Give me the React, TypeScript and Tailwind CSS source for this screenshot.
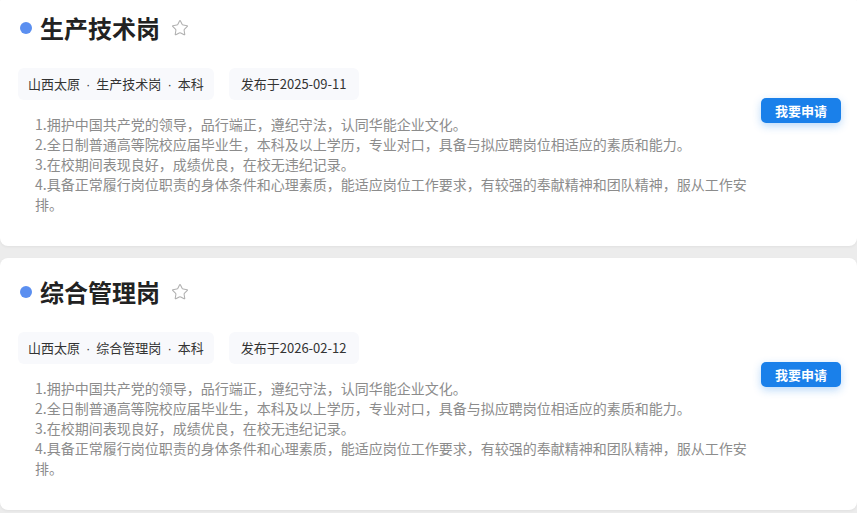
import React from 'react';
import { Star } from 'lucide-react';

const REQUIREMENTS = [
  '1.拥护中国共产党的领导，品行端正，遵纪守法，认同华能企业文化。',
  '2.全日制普通高等院校应届毕业生，本科及以上学历，专业对口，具备与拟应聘岗位相适应的素质和能力。',
  '3.在校期间表现良好，成绩优良，在校无违纪记录。',
  '4.具备正常履行岗位职责的身体条件和心理素质，能适应岗位工作要求，有较强的奉献精神和团队精神，服从工作安排。',
];

const JOBS = [
  { title: '生产技术岗', date: '2025-09-11' },
  { title: '综合管理岗', date: '2026-02-12' },
];

const Dot = () => <span className="font-['Liberation_Sans',sans-serif] mx-[6px]">·</span>;

const JobCard = ({ title, date }: { title: string; date: string }) => (
  <div className="bg-white rounded-lg h-[252px] pt-[16px] pl-[18px] pr-[16px] shadow-[0_1px_3px_rgba(0,0,0,0.05)]">
    {/* Title */}
    <div className="flex items-center h-[36px]">
      <span className="ml-[2px] w-[12px] h-[12px] rounded-full bg-[#5b8ff0]" />
      <h2 className="ml-[8px] text-[24px] font-bold text-[#222] leading-[36px]">{title}</h2>
      <Star size={18} strokeWidth={1.4} className="ml-[11px] text-[#b0b0b0]" />
    </div>

    <div className="flex items-start mt-[22px]">
      <div className="flex-1">
        {/* Tags */}
        <div className="flex gap-[15px]">
          <span className="h-[32px] leading-[32px] px-[10px] rounded-md bg-[#f8f9fc] text-[13px] text-[#333]">
            山西太原<Dot />{title}<Dot />本科
          </span>
          <span className="h-[32px] leading-[32px] px-[12px] rounded-md bg-[#f8f9fc] text-[13px] text-[#333]">
            发布于{date}
          </span>
        </div>

        {/* Requirements */}
        <div className="mt-[14px] pl-[17px] w-[742px] text-[14px] leading-[20px] text-[#8c8c8c]">
          {REQUIREMENTS.map((r) => (
            <p key={r}>{r}</p>
          ))}
        </div>
      </div>

      <button className="mt-[30px] w-[80px] h-[25px] rounded-[5px] bg-[#1a80ea] text-white text-[13px] font-bold shadow-[0_3px_8px_rgba(26,128,234,0.3)]">
        我要申请
      </button>
    </div>
  </div>
);

const App: React.FC = () => {
  return (
    <div className="w-[857px] h-[513px] overflow-hidden bg-[#ececec] font-['Noto_Sans_CJK_SC',sans-serif]">
      <div className="flex flex-col gap-[12px] -mt-[6px]">
        {JOBS.map((job) => (
          <JobCard key={job.title} {...job} />
        ))}
      </div>
    </div>
  );
};

export default App;
